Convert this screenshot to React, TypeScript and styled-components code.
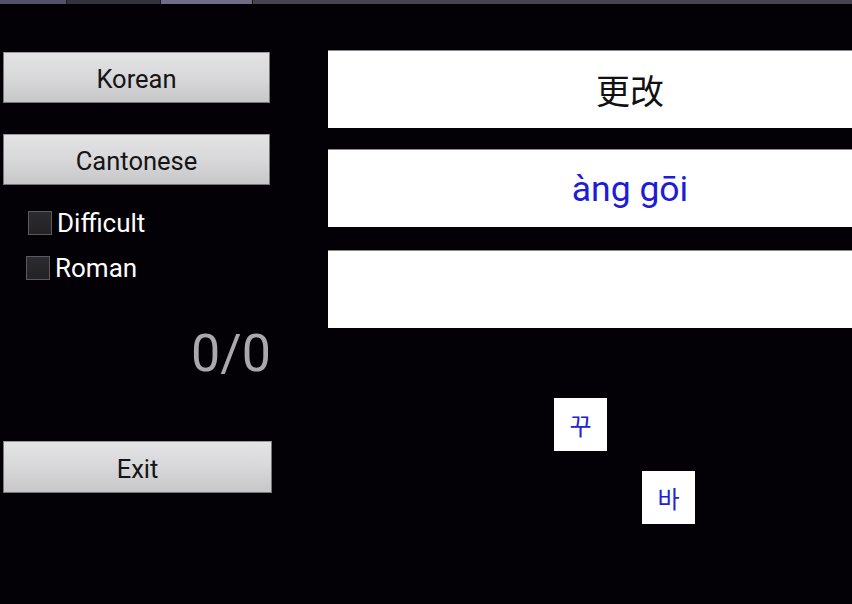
import React from "react";
import styled, { createGlobalStyle } from "styled-components";

const Global = createGlobalStyle`
  html, body { margin: 0; padding: 0; background: #030105; }
  body { width: 852px; height: 604px; overflow: hidden; font-family: Roboto, "Noto Sans", sans-serif; }
`;

const Screen = styled.div`
  width: 852px;
  height: 604px;
  background: #030105;
  overflow: hidden;
  display: flex;
  flex-direction: column;
`;

const TabStrip = styled.div`
  height: 4px;
  display: flex;
  gap: 1px;
  background: #1a1820;
`;

const TabSeg = styled.div<{ $w: number; $c: string }>`
  width: ${(p) => p.$w}px;
  flex: ${(p) => (p.$w === 0 ? 1 : "none")};
  background: ${(p) => p.$c};
`;

const Body = styled.div`
  flex: 1;
  display: flex;
`;

const LeftCol = styled.div`
  width: 272px;
  padding: 48px 0 0 3px;
  box-sizing: border-box;
  display: flex;
  flex-direction: column;
`;

const GrayButton = styled.button<{ $w: number; $mt: number; $h?: number }>`
  width: ${(p) => p.$w}px;
  height: ${(p) => p.$h ?? 51}px;
  margin-top: ${(p) => p.$mt}px;
  border: 1px solid #77767a;
  border-top-color: #9a999d;
  background: linear-gradient(to bottom, #e3e2e5 0%, #d8d7da 50%, #c7c6c9 100%);
  font-family: Roboto, "Noto Sans", sans-serif;
  font-size: 25.5px;
  color: #151515;
  padding: 3px 0 0;
  display: flex;
  align-items: center;
  justify-content: center;
  cursor: pointer;
`;

const CheckRow = styled.label<{ $mt: number; $pl: number }>`
  display: flex;
  align-items: center;
  margin-top: ${(p) => p.$mt}px;
  padding-left: ${(p) => p.$pl}px;
  height: 24px;
  color: #ffffff;
  font-size: 26px;
  font-family: Roboto, "Noto Sans", sans-serif;
`;

const Box = styled.span`
  width: 24px;
  height: 24px;
  box-sizing: border-box;
  border: 1px solid #5a5a5e;
  background: linear-gradient(to bottom, #2c2c30, #232326);
  margin-right: 5px;
  flex: none;
`;

const Score = styled.div`
  margin-top: 47px;
  width: 268px;
  text-align: right;
  font-size: 52px;
  line-height: 54px;
  color: #a9a9ab;
  font-family: Roboto, "Noto Sans", sans-serif;
`;

const RightCol = styled.div`
  margin-left: 56px;
  padding-top: 46px;
  display: flex;
  flex-direction: column;
  flex: none;
  width: 604px;
`;

const Panel = styled.div<{ $mt: number; $blue?: boolean }>`
  width: 604px;
  height: 78px;
  margin-top: ${(p) => p.$mt}px;
  background: #ffffff;
  border-top: 1px solid #8a8a8a;
  box-sizing: border-box;
  display: flex;
  align-items: center;
  justify-content: center;
  font-size: ${(p) => (p.$blue ? 35.5 : 34)}px;
  color: ${(p) => (p.$blue ? "#1d1dd8" : "#111111")};
  font-family: Roboto, "Noto Sans CJK SC", sans-serif;
`;

const TileArea = styled.div`
  position: relative;
  flex: 1;
`;

const Tile = styled.div<{ $x: number; $y: number }>`
  position: absolute;
  left: ${(p) => p.$x}px;
  top: ${(p) => p.$y}px;
  width: 53px;
  height: 53px;
  background: #ffffff;
  color: #2222d4;
  font-size: 24px;
  font-weight: 400;
  font-family: "Noto Sans CJK KR", sans-serif;
  display: flex;
  align-items: center;
  justify-content: center;
`;

export default function App() {
  return (
    <Screen>
      <Global />
      <TabStrip>
        <TabSeg $w={66} $c="#55516a" />
        <TabSeg $w={93} $c="#35323f" />
        <TabSeg $w={91} $c="#716c85" />
        <TabSeg $w={0} $c="#47444f" />
      </TabStrip>
      <Body>
        <LeftCol>
          <GrayButton $w={267} $mt={0}>Korean</GrayButton>
          <GrayButton $w={267} $mt={31}>Cantonese</GrayButton>
          <CheckRow $mt={26} $pl={25}>
            <Box />
            Difficult
          </CheckRow>
          <CheckRow $mt={21} $pl={23}>
            <Box />
            Roman
          </CheckRow>
          <Score>0/0</Score>
          <GrayButton $w={269} $mt={60} $h={52}>Exit</GrayButton>
        </LeftCol>
        <RightCol>
          <Panel $mt={0}>更改</Panel>
          <Panel $mt={21} $blue>àng gōi</Panel>
          <Panel $mt={23} />
          <TileArea>
            <Tile $x={226} $y={70}>꾸</Tile>
            <Tile $x={314} $y={143}>바</Tile>
          </TileArea>
        </RightCol>
      </Body>
    </Screen>
  );
}
